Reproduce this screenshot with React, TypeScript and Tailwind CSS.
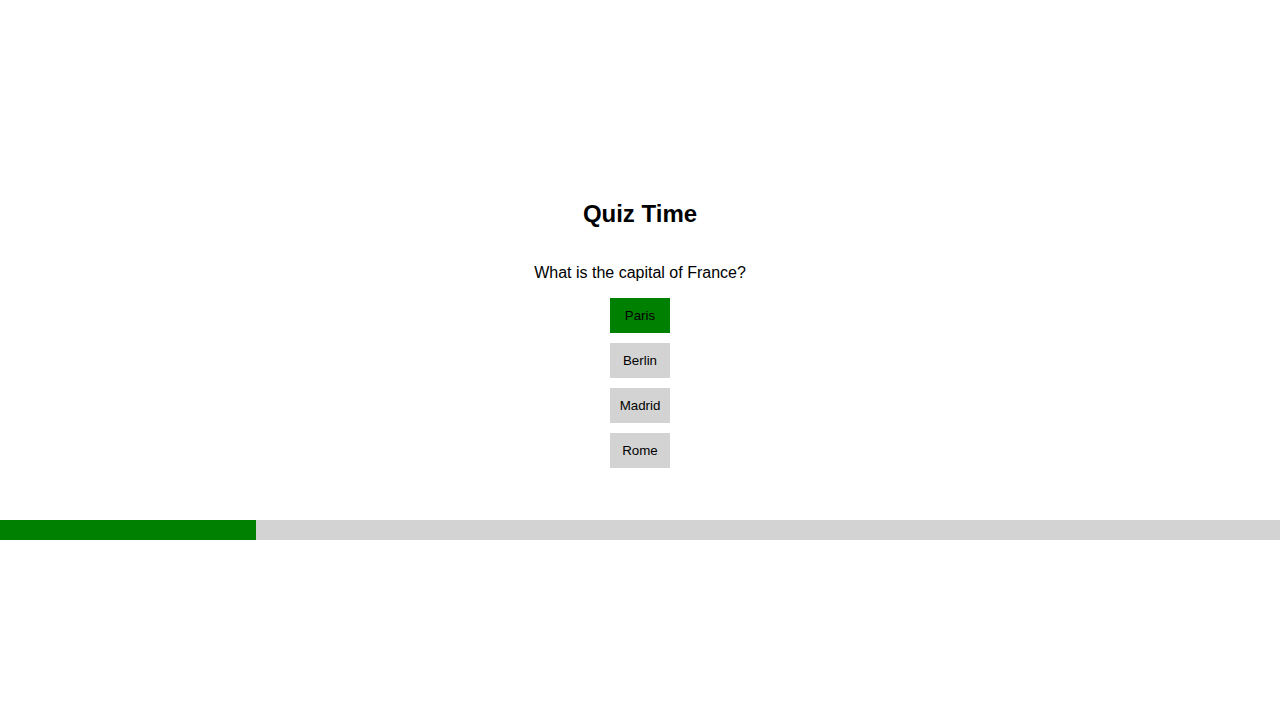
import React from "react";

export default function App() {
  const options = ["Paris", "Berlin", "Madrid", "Rome"];
  const selected = "Paris";
  return (
    <div
      className="h-screen w-full flex flex-col justify-center bg-white text-black"
      style={{ fontFamily: '"Liberation Sans", Arial, sans-serif' }}
    >
      <h2 className="mt-5 mb-5 text-center text-[24px] leading-[normal] font-bold">Quiz Time</h2>
      <p className="mt-4 mb-4 text-center text-[16px] leading-[normal]">What is the capital of France?</p>
      <div className="flex flex-col items-center gap-[10px]">
        {options.map((o) => (
          <button
            key={o}
            className={`w-[60px] h-[35px] flex items-center justify-center text-[13.33px] leading-[normal] text-black ${
              o === selected ? "bg-[#008000]" : "bg-[#d3d3d3]"
            }`}
          >
            {o}
          </button>
        ))}
      </div>
      <div className="mt-[52px] h-5 w-full bg-[#d3d3d3]">
        <div className="h-full bg-[#008000]" style={{ width: "20%" }} />
      </div>
    </div>
  );
}
